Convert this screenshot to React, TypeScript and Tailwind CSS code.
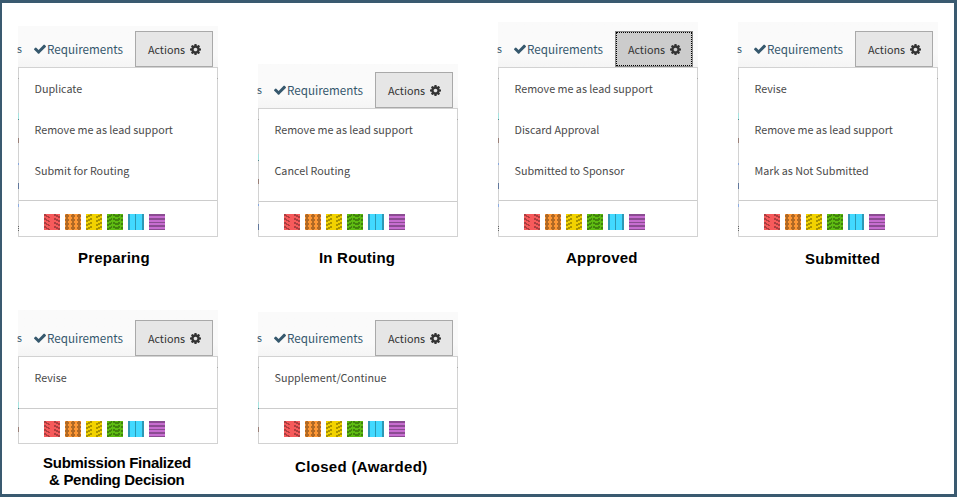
import React from 'react';

function Check() {
  return (
    <svg viewBox="121 270 1550 1252" className="h-[10px] w-[12px] shrink-0" fill="currentColor">
      <path d="M1671 566q0 40-28 68l-724 724-136 136q-28 28-68 28t-68-28l-136-136-362-362q-28-28-28-68t28-68l136-136q28-28 68-28t68 28l294 295 656-657q28-28 68-28t68 28l136 136q28 28 28 68z" />
    </svg>
  );
}

function Gear() {
  return (
    <svg viewBox="128 128 1536 1536" className="size-[11px] shrink-0" fill="currentColor">
      <path d="M1152 896q0-106-75-181t-181-75-181 75-75 181 75 181 181 75 181-75 75-181zm512-109v222q0 12-8 23t-20 13l-185 28q-19 54-39 91 35 50 107 138 10 12 10 25t-9 23q-27 37-99 108t-94 71q-12 0-26-9l-138-108q-44 23-91 38-16 136-29 186-7 28-36 28h-222q-14 0-24.5-8.5t-11.5-21.5l-28-184q-49-16-90-37l-141 107q-10 9-25 9-14 0-25-11-126-114-165-168-7-10-7-23 0-12 8-23 15-21 51-66.5t54-70.5q-27-50-41-99l-183-27q-13-2-21-12.5t-8-23.5v-222q0-12 8-23t19-13l186-28q14-46 39-92-40-57-107-138-10-12-10-24 0-10 9-23 26-36 98.5-107.5t94.5-71.5q13 0 26 10l138 107q44-23 91-38 16-136 29-186 7-28 36-28h222q14 0 24.5 8.5t11.5 21.5l28 184q49 16 90 37l142-107q9-9 24-9 13 0 25 10 129 119 165 170 7 8 7 22 0 12-8 23-15 21-51 66.5t-54 70.5q26 50 41 98l183 28q13 2 21 12.5t8 23.5z" />
    </svg>
  );
}

const swatches = [
  { base: '#f65a5b', dark: '#ab3f40', d: 'M0 0h2v1h1v1h2v1h1v1h-2v-1h-2v-1h-2zM0 4h2v1h1v1h2v1h1v1h-2v-1h-2v-1h-2zM0 8h2v1h1v1h2v1h1v1h-2v-1h-2v-1h-2zM0 12h2v1h1v1h2v1h1v1h-2v-1h-2v-1h-2zM10 0h2v1h2v1h2v2h-2v-1h-2v-1h-2zM10 4h2v1h2v1h2v2h-2v-1h-2v-1h-2zM10 8h2v1h2v1h2v2h-2v-1h-2v-1h-2zM10 12h2v1h2v1h2v2h-2v-1h-2v-1h-2z' },
  { base: '#fd9735', dark: '#b06925', d: 'M1 0h2v16h-2zM7 0h2v16h-2zM13 0h2v16h-2zM0 1h4v2h-4zM0 5h4v2h-4zM0 9h4v2h-4zM0 13h4v2h-4zM6 1h4v2h-4zM6 5h4v2h-4zM6 9h4v2h-4zM6 13h4v2h-4zM12 1h4v2h-4zM12 5h4v2h-4zM12 9h4v2h-4zM12 13h4v2h-4z' },
  { base: '#f2d200', dark: '#a99300', d: 'M6 0h-2v1h-2v1h-2v2h2v-1h2v-1h2zM6 4h-2v1h-2v1h-2v2h2v-1h2v-1h2zM6 8h-2v1h-2v1h-2v2h2v-1h2v-1h2zM6 12h-2v1h-2v1h-2v2h2v-1h2v-1h2zM16 0h-2v1h-2v1h-2v2h2v-1h2v-1h2zM16 4h-2v1h-2v1h-2v2h2v-1h2v-1h2zM16 8h-2v1h-2v1h-2v2h2v-1h2v-1h2zM16 12h-2v1h-2v1h-2v2h2v-1h2v-1h2z' },
  { base: '#5ebc12', dark: '#41830c', d: 'M0 2h2v-1h2v-1h1v2h-1v1h-2v1h-2zM0 6h2v-1h2v-1h1v2h-1v1h-2v1h-2zM0 10h2v-1h2v-1h1v2h-1v1h-2v1h-2zM0 14h2v-1h2v-1h1v2h-1v1h-2v1h-2zM6 0h2v1h3v-1h2v2h-1v1h-4v-1h-2zM6 4h2v1h3v-1h2v2h-1v1h-4v-1h-2zM6 8h2v1h3v-1h2v2h-1v1h-4v-1h-2zM6 12h2v1h3v-1h2v2h-1v1h-4v-1h-2zM14 1h2v2h-2zM14 5h2v2h-2zM14 9h2v2h-2zM14 13h2v2h-2z' },
  { base: '#42d9ff', dark: '#2e98b3', d: 'M0 0h2v16h-2zM7 0h1v16h-1zM14 0h2v16h-2z' },
  { base: '#c76dd0', dark: '#8b4c92', d: 'M0 0h16v2h-16zM0 4h16v2h-16zM0 8h16v1h-16zM0 11h16v2h-16zM0 15h16v1h-16z' },
];

type Mark = { y: string; color: string };

const rowMarks: Mark[] = [
  { y: 'top-[10px] h-px', color: 'bg-[#aaaaaa]' },
  { y: 'top-[45px] h-[6px]', color: 'bg-[#a5e3df]' },
  { y: 'top-[51px] h-px', color: 'bg-[#52898b]' },
  { y: 'top-[70px] h-[5px]', color: 'bg-[#9a8078]' },
  { y: 'top-[95px] h-[2px]', color: 'bg-[#86a7df]' },
  { y: 'top-[115px] h-[6px]', color: 'bg-[#62789c]' },
  { y: 'top-[136px] h-[3px]', color: 'bg-[#8cace2]' },
  { y: 'top-[158px] h-px', color: 'bg-[#666666]' },
  { y: 'top-[160px] h-px', color: 'bg-[#666666]' },
  { y: 'top-[162px] h-px', color: 'bg-[#666666]' },
];

type CardProps = {
  top: string;
  header: string;
  items: string[];
  foot: string;
  swatchPad: string;
  marks: number;
  focused?: boolean;
  children: React.ReactNode;
};

function Card({ top, header, items, foot, swatchPad, marks, focused, children }: CardProps) {
  return (
    <section className={`w-[200px] ${top}`}>
      <header className={`flex items-end justify-between bg-linear-to-b from-[#fafafa] from-70% to-[#f5f5f5] pr-[5px] ${header}`}>
        <div className="flex h-[36px] items-center pb-px text-[11.65px] leading-[16px] text-[#36586d]">
          <span className="-ml-px w-[5px] text-[10.5px]">s</span>
          <span className="ml-[12px] flex items-center"><Check /><span className="ml-px">Requirements</span></span>
        </div>
        <button className={`flex h-[36px] w-[78px] items-center justify-center gap-[5px] border pl-px text-[10.8px] leading-[16px] text-[#333] ${focused ? 'border-[#888] bg-[#cccccc] outline-1 -outline-offset-2 outline-dotted outline-black' : 'border-[#a9a9a9] bg-[#e6e6e6]'}`}>
          <span>Actions</span> <span className="pt-px"><Gear /></span>
        </button>
      </header>
      <div className="relative border border-[#d2d2d2] text-[10.75px] leading-[16px] text-[#4a4a4a]">
        <ul>
          {items.map((item) => <li key={item} className="flex h-[41px] items-center pt-px pl-[15.5px]">{item}</li>)}
        </ul>
        <div className={`border-b border-[#cccccc] ${foot}`} />
        <div className={`flex gap-[5px] pb-[6px] pl-[25px] ${swatchPad}`}>
          {swatches.map((s) => (
            <svg key={s.base} viewBox="0 0 16 16" className="size-4" shapeRendering="crispEdges">
              <rect width="16" height="16" fill={s.base} />
              <path d={s.d} fill={s.dark} />
            </svg>
          ))}
        </div>
        {rowMarks.slice(0, marks).map((m) => <i key={m.y} className={`absolute -left-px w-px ${m.y} ${m.color}`} />)}
        <i className="absolute top-[10px] -right-px h-px w-px bg-[#aaaaaa]" />
      </div>
      <h2 className="flex flex-col text-[15px] font-bold leading-[17px] text-black font-['Liberation_Sans',sans-serif]">{children}</h2>
    </section>
  );
}

export default function App() {
  return (
    <main className="h-[497px] w-[957px] overflow-hidden border-[3px] border-l-2 border-[#3a5a70] bg-white pl-[16px] font-['Noto_Sans_CJK_SC',sans-serif]">
      <div className="flex h-[297px] items-start gap-[40px]">
        <Card top="pt-[23px]" header="h-[41px]" items={['Duplicate', 'Remove me as lead support', 'Submit for Routing']} foot="h-[10px]" swatchPad="pt-[13px]" marks={10}>
          <span className="mt-[12px] ml-[60px] tracking-[0.2px]">Preparing</span>
        </Card>
        <Card top="pt-[61px]" header="h-[44px]" items={['Remove me as lead support', 'Cancel Routing']} foot="h-[11px]" swatchPad="pt-[12px]" marks={6}>
          <span className="mt-[12px] ml-[61px] tracking-[0.2px]">In Routing</span>
        </Card>
        <Card top="pt-[19px]" header="h-[45px]" items={['Remove me as lead support', 'Discard Approval', 'Submitted to Sponsor']} foot="h-[10px]" swatchPad="pt-[13px]" marks={10} focused>
          <span className="mt-[12px] ml-[68px] tracking-[0.2px]">Approved</span>
        </Card>
        <Card top="pt-[19px]" header="h-[45px]" items={['Revise', 'Remove me as lead support', 'Mark as Not Submitted']} foot="h-[10px]" swatchPad="pt-[13px]" marks={10}>
          <span className="mt-[13px] ml-[67px] tracking-[0.2px]">Submitted</span>
        </Card>
      </div>
      <div className="flex items-start gap-[40px]">
        <Card top="pt-[10px]" header="h-[46px]" items={['Revise']} foot="h-[11px]" swatchPad="pt-[12px]" marks={4}>
          <span className="mt-[10px] ml-[25px] whitespace-nowrap tracking-[-0.27px]">Submission Finalized</span>
          <span className="ml-[31px] whitespace-nowrap tracking-[-0.3px]">&amp; Pending Decision</span>
        </Card>
        <Card top="pt-[12px]" header="h-[44px]" items={['Supplement/Continue']} foot="h-[11px]" swatchPad="pt-[12px]" marks={4}>
          <span className="mt-[14px] ml-[37px] whitespace-nowrap tracking-[0.33px]">Closed (Awarded)</span>
        </Card>
      </div>
    </main>
  );
}
